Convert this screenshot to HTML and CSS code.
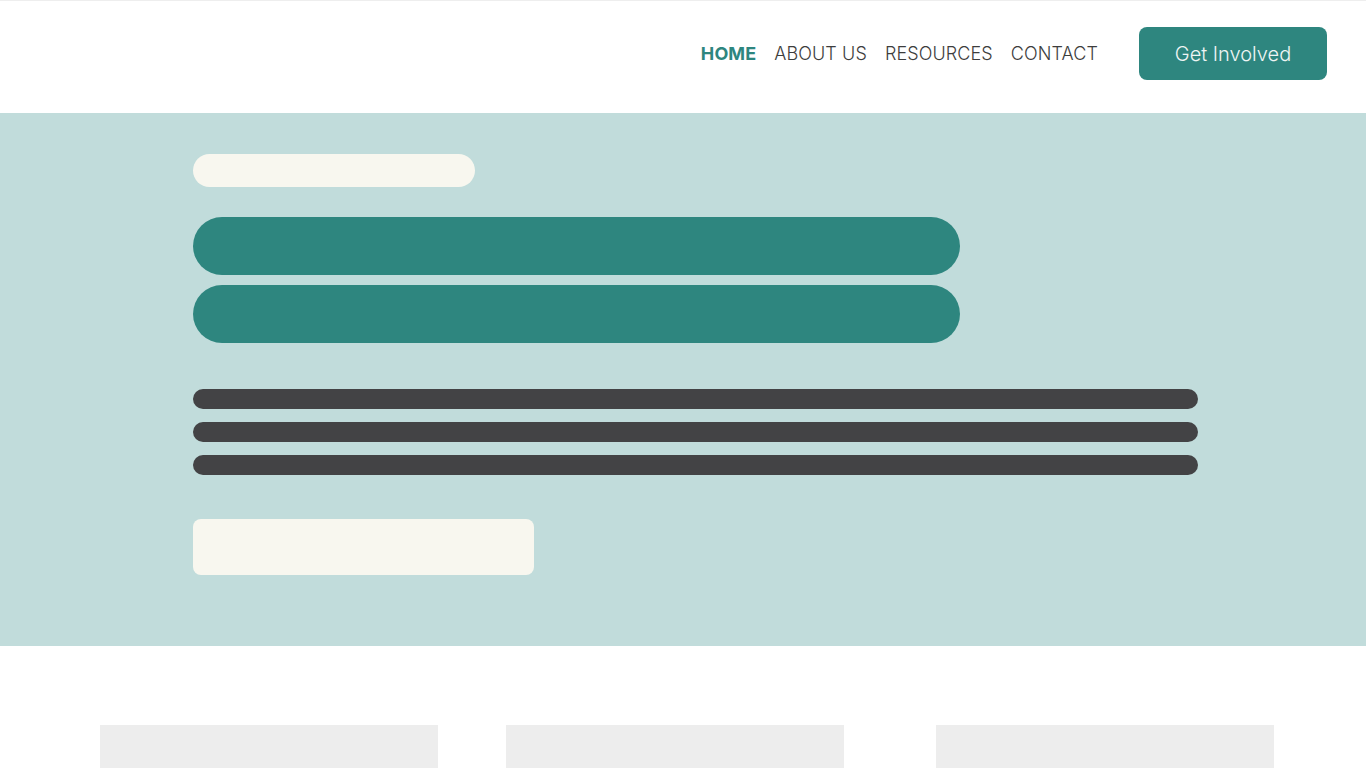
FILE: index.html
```html
<!DOCTYPE html>
<html lang="en">
<head>
<meta charset="utf-8">
<title>Home</title>
<link rel="stylesheet" href="styles.css">
</head>
<body>
<header class="site-header">
  <nav class="main-nav">
    <a class="nav-link active" href="#">HOME</a>
    <a class="nav-link" href="#">ABOUT US</a>
    <a class="nav-link" href="#">RESOURCES</a>
    <a class="nav-link" href="#">CONTACT</a>
  </nav>
  <a class="cta" href="#">Get Involved</a>
</header>
<section class="hero">
  <div class="hero-inner">
    <div class="ph-eyebrow"></div>
    <div class="ph-title"></div>
    <div class="ph-title"></div>
    <div class="ph-text first"></div>
    <div class="ph-text"></div>
    <div class="ph-text"></div>
    <div class="ph-button"></div>
  </div>
</section>
<section class="cards">
  <div class="card"></div>
  <div class="card c2"></div>
  <div class="card c3"></div>
</section>
</body>
</html>
```
FILE: styles.css
```css
* { box-sizing: border-box; }
html, body { margin: 0; padding: 0; }
body {
  font-family: Inter, "Liberation Sans", sans-serif;
  background: #ffffff;
  overflow: hidden;
  height: 768px;
}
.site-header {
  height: 113px;
  border-top: 1px solid #eeeeee;
  display: flex;
  align-items: center;
  justify-content: flex-end;
  padding-right: 39px;
}
.main-nav {
  display: flex;
  align-items: center;
  gap: 18px;
  margin-right: 41px;
  margin-top: -7px;
}
.nav-link {
  font-size: 18px;
  font-weight: 300;
  color: #3d3d3d;
  text-decoration: none;
  letter-spacing: 0.1px;
}
.nav-link.active {
  font-weight: 700;
  color: #2e867f;
}
.cta {
  display: flex;
  align-items: center;
  justify-content: center;
  width: 188px;
  height: 53px;
  border-radius: 8px;
  background: #2e867f;
  color: #eef5f4;
  font-size: 20px;
  font-weight: 300;
  text-decoration: none;
  margin-top: -7px;
}
.hero {
  height: 533px;
  background: #c1dcdb;
  padding-top: 41px;
}
.hero-inner {
  margin-left: 193px;
  display: flex;
  flex-direction: column;
  align-items: flex-start;
}
.ph-eyebrow {
  width: 282px;
  height: 33px;
  border-radius: 17px;
  background: #f8f7ef;
  margin-bottom: 30px;
}
.ph-title {
  width: 767px;
  height: 58px;
  border-radius: 29px;
  background: #2e867f;
  margin-bottom: 10px;
}
.ph-text {
  width: 1005px;
  height: 20px;
  border-radius: 10px;
  background: #434345;
  margin-bottom: 13px;
}
.ph-text.first { margin-top: 36px; }
.ph-button {
  width: 341px;
  height: 56px;
  border-radius: 8px;
  background: #f8f7ef;
  margin-top: 31px;
}
.cards {
  display: flex;
  padding: 79px 0 0 100px;
}
.card {
  width: 338px;
  height: 43px;
  background: #ededed;
}
.card.c2 { margin-left: 68px; }
.card.c3 { margin-left: 92px; }
```
